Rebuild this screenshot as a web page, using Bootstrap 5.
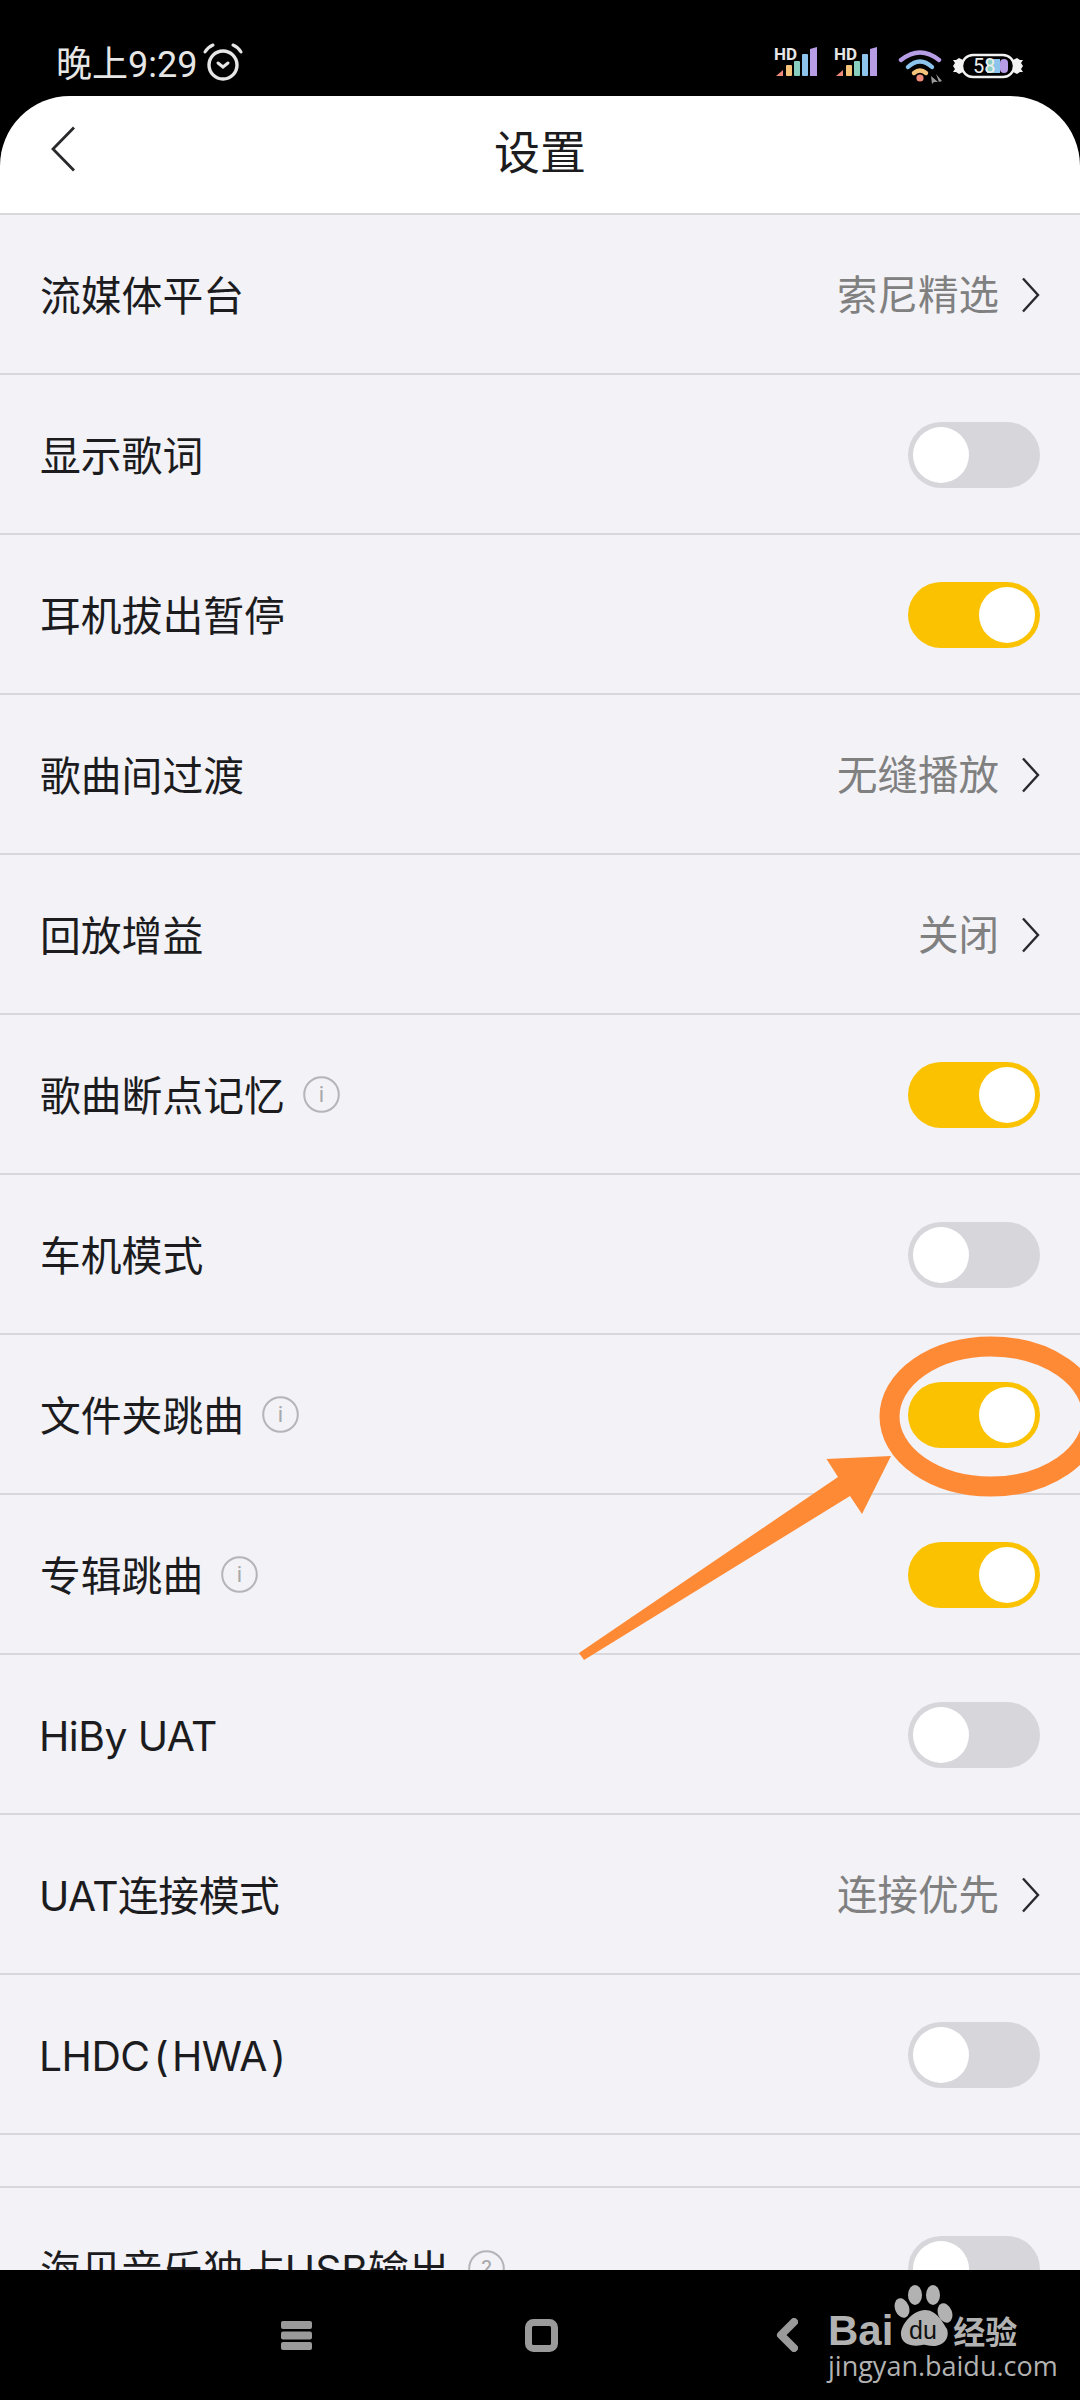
<!DOCTYPE html>
<html lang="zh">
<head>
  <meta charset="UTF-8">
  <title>设置</title>
  <link href="https://cdn.jsdelivr.net/npm/bootstrap@5.3.0/dist/css/bootstrap.min.css" rel="stylesheet">
  <style>
    body { background: #000; font-family: Inter, "Noto Sans CJK SC", sans-serif; }
    .phone { width: 1080px; height: 2400px; overflow: hidden; position: relative; background: #000; }
    .status-bar { height: 96px; padding: 44px 56px 0 56px; color: #e6e6e6; font-size: 36px; line-height: 42px; }
    .status-bar svg { display: block; }
    .status-time { margin-right: 6px; font-family: Roboto, "Noto Sans CJK SC", sans-serif; }
    .status-alarm { margin-top: -1px; }
    .status-right { margin-left: auto; gap: 17px; }
    .top-title { height: 119px; padding-bottom: 4px; background: #fff; border-top-left-radius: 70px; border-top-right-radius: 70px; border-bottom: 2px solid #d8d8dc; position: relative; font-size: 46px; color: #1c1c1e; }
    .top-back { position: absolute; left: 50px; top: 30px; }
    .settings { flex: 1 1 auto; min-height: 0; overflow: hidden; background: #f2f2f7; }
    .set-row { height: 160px; padding: 2px 40px 0; border-bottom: 2px solid #d8d8dc; font-size: 40.8px; color: #1c1c1e; }
    .set-gap { height: 53px; border-bottom: 2px solid #d8d8dc; }
    .set-row:last-child { border-bottom: 0; }
    .set-label { line-height: 1; padding-top: 2px; }
    .set-latin { letter-spacing: -0.5px; margin-left: -1px; }
    .set-paren { margin: 0 4px; }
    .set-value { color: #808080; font-size: 40.5px; margin-right: 23px; line-height: 1; padding-top: 2px; }
    .set-info { margin-left: 18px; }
    .tgl { width: 132px; height: 66px; border-radius: 33px; background: #d6d6db; padding: 5px; }
    .tgl i { display: block; width: 56px; height: 56px; border-radius: 50%; background: #fff; }
    .tgl-on { background: #fac200; justify-content: flex-end; }
    .nav-bottom { height: 130px; background: #000; padding-left: 281px; flex: 0 0 auto; }
    .nav-home { margin-left: 213px; }
    .nav-back { margin-left: 218px; }
    .wm { position: absolute; left: 828px; top: 2285px; color: #b2b2b2; width: 200px; }
    .wm-bai { font: bold 42px/1 "Liberation Sans", sans-serif; margin-bottom: -5px; }
    .wm-cn { font: bold 32px/1 "Noto Sans CJK SC", sans-serif; white-space: nowrap; margin-bottom: 1px; }
    .wm-url { font: 27px/1 "Open Sans", sans-serif; margin-top: 5px; white-space: nowrap; }
    .mark-layer { position: absolute; left: 0; top: 0; pointer-events: none; }
  </style>
</head>
<body>
  <div class="phone d-flex flex-column">

    <div class="status-bar d-flex align-items-start flex-shrink-0">
      <span class="status-time">晚上9:29</span>
      <svg class="status-alarm" width="42" height="40" viewBox="0 0 42 40" fill="none" stroke="#e6e6e6" stroke-linecap="round">
        <circle cx="20" cy="22" r="14" stroke-width="3.4"/>
        <path d="M15 20l5 4 5-4" stroke-width="3"/>
        <path d="M2 9Q5 4 10 2M38 9Q35 4 30 2" stroke-width="3"/>
      </svg>
      <div class="status-right d-flex">
        <svg width="43" height="36" viewBox="0 -2 43 36">
          <text x="0" y="14" font-family="Roboto" font-weight="700" font-size="17" fill="#e6e6e6">HD</text>
          <path d="M2 30L9 24V30Z" fill="#f08a7a"/><rect x="12" y="19" width="6" height="11" rx="1" fill="#f5c37a"/>
          <rect x="20" y="15" width="6" height="15" rx="1" fill="#88cfc0"/><rect x="28" y="8" width="6" height="22" rx="1" fill="#8cc4ee"/>
          <path d="M36 3l7-2V30H36Z" fill="#b79ce6"/>
        </svg>
        <svg width="43" height="36" viewBox="0 -2 43 36">
          <text x="0" y="14" font-family="Roboto" font-weight="700" font-size="17" fill="#e6e6e6">HD</text>
          <path d="M2 30L9 24V30Z" fill="#f08a7a"/><rect x="12" y="19" width="6" height="11" rx="1" fill="#f5c37a"/>
          <rect x="20" y="15" width="6" height="15" rx="1" fill="#88cfc0"/><rect x="28" y="8" width="6" height="22" rx="1" fill="#8cc4ee"/>
          <path d="M36 3l7-2V30H36Z" fill="#b79ce6"/>
        </svg>
        <svg class="ms-1 mt-1" width="46" height="36" viewBox="0 0 46 36" fill="none" stroke-linecap="round" stroke-width="4.400">
          <path d="M3 12Q22 -3 41 12" stroke="#b79ce6"/>
          <path d="M10 19Q22 8 34 19" stroke="#8cc4ee"/>
          <path d="M16 25Q22 20 28 25" stroke="#f5c37a"/>
          <circle cx="22" cy="30" r="3.600" fill="#f08a7a" stroke="none"/>
          <path d="M33 28l7 6h-4l-2 2zM38 26l6 7-3 1z" fill="#999" stroke="none"/>
        </svg>
        <svg class="mt-2" style="margin-left:-9px" width="72" height="28" viewBox="0 0 72 28">
          <path d="M11 8L7 6 4 8 1 8 3 11 1 14 3 17 1 20 4 20 7 22 11 20zM61 8l4-2 3 2 3 0-2 3 2 3-2 3 2 3-3 0-3 2-4-2z" fill="#f2f2f2"/>
          <rect x="10" y="3" width="52" height="22" rx="11" fill="#000" stroke="#f2f2f2" stroke-width="2.400"/>
          <rect x="35" y="7" width="10" height="14" fill="#88cfc0"/><rect x="42" y="7" width="6" height="14" fill="#8cc4ee"/>
          <rect x="48" y="7" width="8" height="14" rx="4" fill="#b79ce6"/>
          <text x="21" y="21" font-family="Roboto" font-size="20" fill="#eee">58</text>
        </svg>
      </div>
    </div>

    <div class="top-title d-flex align-items-center justify-content-center flex-shrink-0">
      <svg class="top-back" width="26" height="46" viewBox="0 0 26 46" fill="none" stroke="#2a2a2c" stroke-width="2.800">
        <path d="M24 1.500L3 23l21 21.500"/>
      </svg>
      <span>设置</span>
    </div>

    <div class="settings" id="settings"></div>

    <div class="nav-bottom d-flex align-items-center">
      <svg width="31" height="29" viewBox="0 0 31 29" fill="#9a9a9a">
        <rect width="31" height="8" rx="2"/><rect y="10.500" width="31" height="8" rx="2"/><rect y="21" width="31" height="8" rx="2"/>
      </svg>
      <svg class="nav-home" width="33" height="33" viewBox="0 0 33 33" fill="none" stroke="#9a9a9a" stroke-width="7">
        <rect x="3.500" y="3.500" width="26" height="26" rx="5"/>
      </svg>
      <svg class="nav-back" width="22" height="34" viewBox="0 0 22 34" fill="none" stroke="#9a9a9a" stroke-width="8" stroke-linecap="round" stroke-linejoin="round">
        <path d="M18 4L5 17l13 13"/>
      </svg>
    </div>

    <div class="wm">
      <div class="d-flex align-items-end">
        <span class="wm-bai">Bai</span>
        <svg width="60" height="62" viewBox="0 0 60 62">
          <g fill="#b2b2b2">
            <ellipse cx="22" cy="10" rx="7" ry="10"/><ellipse cx="40" cy="10" rx="7" ry="10"/>
            <ellipse cx="9" cy="23" rx="7" ry="10" transform="rotate(-20 9 23)"/><ellipse cx="52" cy="28" rx="7" ry="10" transform="rotate(-20 52 28)"/>
            <path d="M32 25C44 25 50 38 54 44 57 54 50 61 40 61 35 61 33 59 29 60 20 62 9 60 8 50 7 40 20 25 32 25Z"/>
          </g>
          <text x="30" y="54" text-anchor="middle" font-family="Liberation Sans" font-size="25" fill="#111">du</text>
        </svg>
        <span class="wm-cn">经验</span>
      </div>
      <div class="wm-url">jingyan.baidu.com</div>
    </div>

    <svg class="mark-layer" width="1080" height="2400" viewBox="0 0 1080 2400">
      <ellipse cx="991" cy="1416.500" rx="101.500" ry="70" fill="none" stroke="#ff8a35" stroke-width="20"/>
      <path d="M579 1653L838 1477 826.500 1459 891 1456 862 1514 850 1496 584 1660Z" fill="#ff8a35"/>
    </svg>
  </div>

  <script>
    // s = toggle state, v = value with chevron, i = hint icon, l = starts with latin text
    const filas = [
      { t: "流媒体平台", v: "索尼精选" },
      { t: "显示歌词", s: 0 },
      { t: "耳机拔出暂停", s: 1 },
      { t: "歌曲间过渡", v: "无缝播放" },
      { t: "回放增益", v: "关闭" },
      { t: "歌曲断点记忆", s: 1, i: "i" },
      { t: "车机模式", s: 0 },
      { t: "文件夹跳曲", s: 1, i: "i" },
      { t: "专辑跳曲", s: 1, i: "i" },
      { t: "HiBy UAT", s: 0, l: true },
      { t: "UAT连接模式", v: "连接优先", l: true },
      { t: `LHDC<span class="set-paren">(</span>HWA<span class="set-paren">)</span>`, s: 0, l: true },
      { gap: true },
      { t: "海贝音乐独占USB输出", s: 0, i: "?" }
    ];

    const chevron = `<svg width="18" height="36" viewBox="0 0 18 36" fill="none" stroke="#2a2a2c" stroke-width="2.400"><path d="M1 1.500L16 18 1 34.500"/></svg>`;

    function infoIcon(c) {
      return `<svg class="set-info" width="37" height="37" viewBox="0 0 37 37"><circle cx="18.500" cy="18.500" r="17.300" fill="none" stroke="#b5b5b8" stroke-width="2"/><text x="18.500" y="26" text-anchor="middle" font-family="Roboto" font-size="22" fill="#a8a8ab">${c}</text></svg>`;
    }

    document.getElementById("settings").innerHTML = filas.map(f => {
      if (f.gap) return `<div class="set-gap"></div>`;
      const izq = `<div class="d-flex align-items-center"><span class="set-label ${f.l ? "set-latin" : ""}">${f.t}</span>${f.i ? infoIcon(f.i) : ""}</div>`;
      const der = f.v
        ? `<div class="d-flex align-items-center"><span class="set-value">${f.v}</span>${chevron}</div>`
        : `<div class="tgl d-flex ${f.s ? "tgl-on" : ""}"><i></i></div>`;
      return `<div class="set-row d-flex align-items-center justify-content-between">${izq}${der}</div>`;
    }).join("");
  </script>
  <script src="https://cdn.jsdelivr.net/npm/bootstrap@5.3.0/dist/js/bootstrap.bundle.min.js"></script>
</body>
</html>
